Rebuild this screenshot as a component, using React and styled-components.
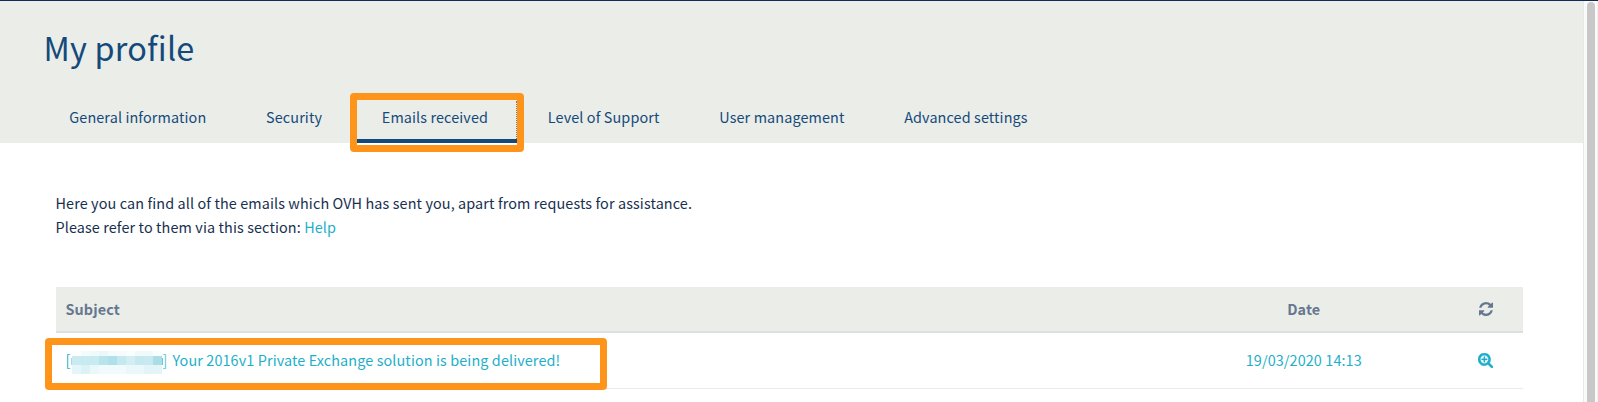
import React from "react";
import styled, { createGlobalStyle } from "styled-components";

const Global = createGlobalStyle`
  * { box-sizing: border-box; }
  body { margin: 0; background: #fff; overflow: hidden; }
`;

const Page = styled.div`
  display: flex;
  height: 402px;
  border-top: 1px solid #14285a;
  font-family: "Noto Sans CJK SC", "Noto Sans", sans-serif;
  font-size: 14.4px;
  letter-spacing: 0.11px;
  line-height: 24px;
  color: #17304f;
`;

const Main = styled.main`
  flex: 1;
  min-width: 0;
`;

const Header = styled.header`
  height: 142px;
  padding-left: 39.4px;
  background: #ebede8;
  color: #144a7b;
`;

const Title = styled.h1`
  margin: 0;
  padding: 21px 0 0 4px;
  font-size: 32.4px;
  line-height: 50px;
  font-weight: 400;
  letter-spacing: 0.22px;
`;

const Tabs = styled.nav`
  display: flex;
  margin-top: 22px;
`;

const Tab = styled.a`
  position: relative;
  height: 49px;
  padding: 11px 29.9px 0;
  white-space: nowrap;
  border-bottom: 4px solid ${(p) => (p.$active ? "#144a7b" : "transparent")};
`;

const Highlight = styled.span`
  position: absolute;
  top: ${(p) => p.$top}px;
  left: ${(p) => p.$left}px;
  width: ${(p) => p.$w}px;
  height: ${(p) => p.$h}px;
  border: 7px solid #ff941a;
  border-radius: 4px;
  pointer-events: none;
`;

const FocusEdge = styled.span`
  position: absolute;
  top: 7px;
  right: 1px;
  height: 38px;
  border-right: 1px dotted #7d7a6a;
`;

const Content = styled.section`
  padding: 48px 60px 0 56px;
`;

const Intro = styled.p`
  margin: 0 0 48px -0.5px;
`;

const Link = styled.a`
  color: #1dafc9;
`;

const Row = styled.div`
  position: relative;
  display: grid;
  grid-template-columns: 1103px 290px 1fr;
  height: ${(p) => (p.$head ? 46 : 56)}px;
  padding-bottom: ${(p) => (p.$head ? 0 : 2)}px;
  border-bottom: ${(p) => (p.$head ? "2px solid #dedfdf" : "1px solid #e9eae9")};
  background: ${(p) => (p.$head ? "#ebede8" : "#fff")};
  color: ${(p) => (p.$head ? "#66788f" : "#1dafc9")};
  font-weight: ${(p) => (p.$head ? 700 : 400)};
`;

const Cell = styled.div`
  display: flex;
  align-items: center;
  padding: 0 10px 0 9.5px;
  white-space: nowrap;
  justify-content: ${(p) => (p.$center ? "center" : "flex-start")};
`;

const Bracket = styled.span`
  width: ${(p) => p.$w}px;
  opacity: ${(p) => (p.$faded ? 0.75 : 1)};
`;

const Stub = styled.span`
  width: 1px;
  height: 7px;
  margin-top: 3px;
  background: ${(p) => p.$color};
`;

const Mosaic = styled.span`
  display: grid;
  grid-template-columns: repeat(10, 9px);
  grid-template-rows: 5px 9px 9px;
  margin-top: 5px;
`;

const Tile = styled.i`
  background: ${(p) => p.$color};
`;

const Icon = styled.svg`
  width: ${(p) => p.$size}px;
  height: ${(p) => p.$size}px;
  margin-top: ${(p) => p.$drop || 0}px;
  fill: currentColor;
`;

const Scrollbar = styled.aside`
  width: 15px;
  padding: 1px 0 0 3px;
  border-left: 1px solid #e8e8e8;
  border-right: 1px solid #f0f0f0;
  background: #fafafa;
`;

const Thumb = styled.div`
  width: 8px;
  height: 410px;
  border-radius: 4px;
  background: #c8c8c8;
`;

const tiles = [
  "#fdfefe", "#f3fbfc", "#f0fafb", "#ebf8fa", "#f3fbfc", "#f6fcfd", "#f8fdfd", "#f0fafb", "#f1fafb", "#f8fdfd",
  "#cbebf2", "#c8eaf1", "#c8eaf1", "#b9e4ec", "#b0e1ea", "#c5e9ef", "#d3eef3", "#c6e9f0", "#c8e9f0", "#abdde7",
  "#e5f6f9", "#dbf2f7", "#eaf8fa", "#f1fafc", "#f1fafc", "#f1fafc", "#ebf8fb", "#ebf8fb", "#e1f4f8", "#e4f5f9",
];

const tabs = ["General information", "Security", "Emails received", "Level of Support", "User management", "Advanced settings"];

export default function App() {
  return (
    <Page>
      <Global />
      <Main>
        <Header>
          <Title>My profile</Title>
          <Tabs>
            {tabs.map((label) => {
              const active = label === "Emails received";
              return (
                <Tab key={label} $active={active}>
                  {label}
                  {active && <FocusEdge />}
                  {active && <Highlight $top={-1} $left={-1.7} $w={173.5} $h={58.5} />}
                </Tab>
              );
            })}
          </Tabs>
        </Header>
        <Content>
          <Intro>
            Here you can find all of the emails which OVH has sent you, apart from requests for assistance.
            <br />
            Please refer to them via this section: <Link>Help</Link>
          </Intro>
          <Row $head>
            <Cell>Subject</Cell>
            <Cell $center>Date</Cell>
            <Cell $center>
              <Icon $size={14} viewBox="0 0 1536 1536">
                <path d="M1511 928q0 5-1 7-64 268-268 434.5t-478 166.5q-146 0-282.5-55t-243.5-157l-129 129q-19 19-45 19t-45-19-19-45v-448q0-26 19-45t45-19h448q26 0 45 19t19 45-19 45l-137 137q71 66 161 102t187 36q134 0 250-65t186-179q11-17 53-117 8-23 30-23h192q13 0 22.5 9.5t9.5 22.5zm25-800v448q0 26-19 45t-45 19h-448q-26 0-45-19t-19-45 19-45l138-138q-148-137-349-137-134 0-250 65t-186 179q-11 17-53 117-8 23-30 23h-199q-13 0-22.5-9.5t-9.5-22.5v-7q65-268 270-434.5t480-166.5q146 0 284 55.5t245 156.5l130-129q19-19 45-19t45 19 19 45z" />
              </Icon>
            </Cell>
          </Row>
          <Row>
            <Cell>
              <Bracket $w={5}>[</Bracket>
              <Stub $color="#a5dce7" />
              <Mosaic>
                {tiles.map((c, i) => (
                  <Tile key={i} $color={c} />
                ))}
              </Mosaic>
              <Stub $color="#6cc8d8" />
              <Bracket $w={10} $faded>]</Bracket>
              Your 2016v1 Private Exchange solution is being delivered!
            </Cell>
            <Cell $center>19/03/2020 14:13</Cell>
            <Cell $center>
              <Icon $size={15} $drop={2} viewBox="0 64 1664 1664">
                <path stroke="currentColor" strokeWidth="40" d="M1024 736v64q0 13-9.5 22.5t-22.5 9.5h-224v224q0 13-9.5 22.5t-22.5 9.5h-64q-13 0-22.5-9.5t-9.5-22.5v-224h-224q-13 0-22.5-9.5t-9.5-22.5v-64q0-13 9.5-22.5t22.5-9.5h224v-224q0-13 9.5-22.5t22.5-9.5h64q13 0 22.5 9.5t9.5 22.5v224h224q13 0 22.5 9.5t9.5 22.5zm128 32q0-185-131.5-316.5t-316.5-131.5-316.5 131.5-131.5 316.5 131.5 316.5 316.5 131.5 316.5-131.5 131.5-316.5zm512 832q0 53-37.5 90.5t-90.5 37.5q-54 0-90-38l-343-342q-179 124-399 124-143 0-273.5-55.5t-225-150-150-225-55.5-273.5 55.5-273.5 150-225 225-150 273.5-55.5 273.5 55.5 225 150 150 225 55.5 273.5q0 220-124 399l343 343q37 37 37 90z" />
              </Icon>
            </Cell>
            <Highlight $top={5.4} $left={-10.6} $w={561.6} $h={52} />
          </Row>
        </Content>
      </Main>
      <Scrollbar>
        <Thumb />
      </Scrollbar>
    </Page>
  );
}
